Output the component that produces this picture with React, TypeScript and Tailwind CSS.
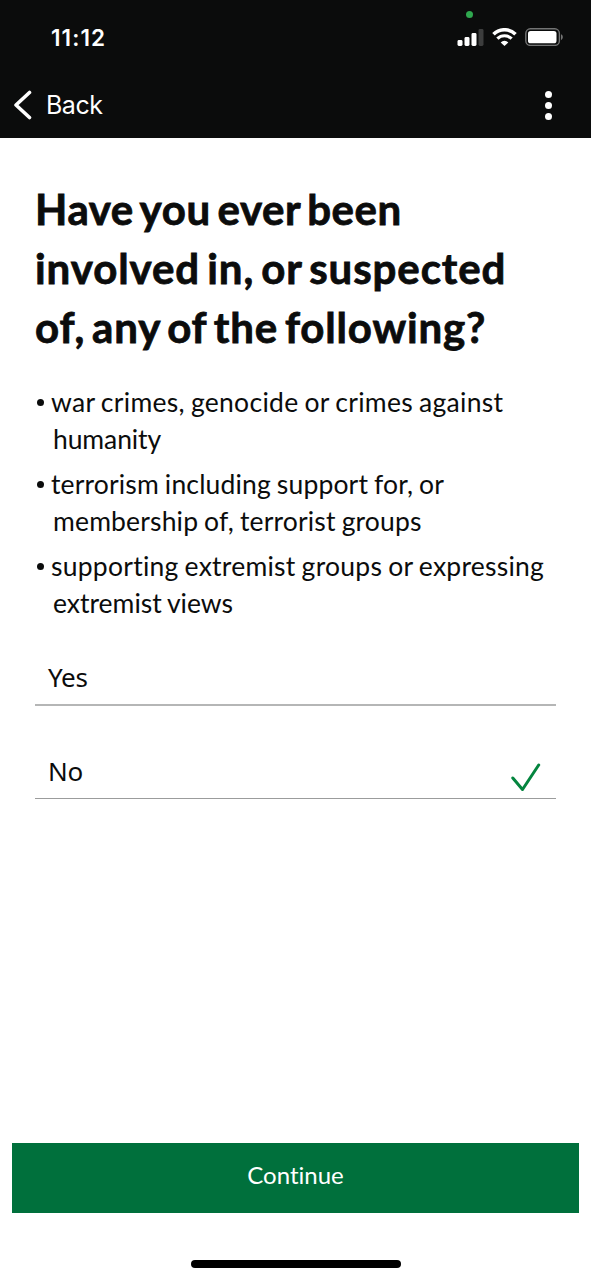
import React, { useState } from 'react';
import clsx from 'clsx';

interface Line {
  text: string;
  className: string;
}

const heading: Line[] = [
  { text: 'Have you ever been', className: 'tracking-[0.58px]' },
  { text: 'involved in, or suspected', className: 'tracking-[0.92px]' },
  { text: 'of, any of the following?', className: 'tracking-[0.83px]' },
];

const bullets: Line[][] = [
  [
    { text: 'war crimes, genocide or crimes against', className: 'tracking-[0.29px]' },
    { text: 'humanity', className: 'tracking-[-0.1px]' },
  ],
  [
    { text: 'terrorism including support for, or', className: 'tracking-[0.16px]' },
    { text: 'membership of, terrorist groups', className: 'tracking-[0.17px]' },
  ],
  [
    { text: 'supporting extremist groups or expressing', className: 'tracking-[0.25px]' },
    { text: 'extremist views', className: 'tracking-[0px]' },
  ],
];

const StatusBar: React.FC = () => (
  <div className="relative flex h-[72px] items-start justify-between pt-[24px] pr-[27px] pl-[51px]">
    <span className="font-['Inter',sans-serif] text-[22.5px] leading-[28px] font-semibold tracking-[1.1px]">11:12</span>
    <span className="absolute top-[11px] left-[465.5px] h-[7px] w-[7px] rounded-full bg-[#2fa84f]" />
    <div className="flex items-center pt-[4px]">
      {/* Signal */}
      <svg className="mr-[8px]" width="27" height="18" viewBox="0 0 27 18" fill="#fff">
        <rect x="0.5" y="12" width="5" height="6" rx="1.4" />
        <rect x="7.5" y="9" width="5" height="9" rx="1.4" />
        <rect x="14.5" y="5" width="5" height="13" rx="1.4" />
        <rect x="21.5" y="1" width="5" height="17" rx="1.4" fill="#3c3d3d" />
      </svg>
      {/* Wifi */}
      <svg className="mr-[8px]" width="25" height="18" viewBox="0 0 25 18" fill="none" stroke="#fff">
        <path d="M1.5 6.3a15.6 15.6 0 0 1 22 0" strokeWidth="3.6" />
        <path d="M5.4 10.7a10 10 0 0 1 14.2 0" strokeWidth="3.2" />
        <path d="M12.5 18L8.7 14.4a5.2 5.2 0 0 1 7.6 0z" fill="#fff" stroke="none" />
      </svg>
      {/* Battery */}
      <svg width="39" height="18" viewBox="0 0 39 18" fill="none">
        <rect x="0.8" y="0.8" width="33.6" height="16.6" rx="4.6" stroke="#737474" strokeWidth="1.4" />
        <rect x="3" y="3" width="28.5" height="12.3" rx="2.6" fill="#fff" />
        <path d="M36 6.3c2.4.8 2.4 4.8 0 5.6z" fill="#737474" />
      </svg>
    </div>
  </div>
);

const NavBar: React.FC = () => (
  <div className="flex h-[66px] items-center justify-between pr-[39px] pl-[13px]">
    <button className="flex items-center gap-[13px]">
      <svg width="20" height="30" viewBox="0 0 20 30" fill="none" stroke="#fff" strokeWidth="3.6" strokeLinecap="round" strokeLinejoin="round">
        <path d="M16.5 2.5L3 15l13.5 12.5" />
      </svg>
      <span className="font-['Inter',sans-serif] text-[25px] leading-[30px] tracking-[-0.5px]">Back</span>
    </button>
    <button className="flex flex-col gap-[4px]">
      <span className="h-[7px] w-[7px] rounded-full bg-white" />
      <span className="h-[7px] w-[7px] rounded-full bg-white" />
      <span className="h-[7px] w-[7px] rounded-full bg-white" />
    </button>
  </div>
);

interface OptionProps {
  label: string;
  selected: boolean;
  className: string;
  onSelect: () => void;
}

const Option: React.FC<OptionProps> = ({ label, selected, className, onSelect }) => (
  <button
    onClick={onSelect}
    className={clsx('flex w-full items-start justify-between pr-[15px] pl-[13px] text-left', className)}
  >
    <span className="font-['Noto_Sans',sans-serif] text-[26px] leading-[52px] tracking-[-0.3px]">{label}</span>
    {selected && (
      <svg className="mt-[18px]" width="30" height="30" viewBox="0 0 30 30" fill="none" stroke="#04853f" strokeWidth="3" strokeLinecap="round" strokeLinejoin="round">
        <path d="M1.8 15l9.7 11.5L27.7 2" />
      </svg>
    )}
  </button>
);

const options = [
  { label: 'Yes', className: 'h-[55px] border-b-2 border-[#b5b6b6]' },
  { label: 'No', className: 'h-[54px] border-b border-[#9b9c9c]' },
];

const App: React.FC = () => {
  const [answer, setAnswer] = useState<string>('No');

  return (
    <div className="flex h-[1280px] w-[591px] flex-col overflow-hidden bg-white font-['Lato',sans-serif] text-[#0b0c0c] [font-variant-ligatures:none]">
      {/* Header */}
      <header className="h-[138px] shrink-0 bg-[#0b0c0c] text-white">
        <StatusBar />
        <NavBar />
      </header>

      {/* Question */}
      <main className="flex-1 px-[35px] pt-[42px]">
        <h1 className="text-[42px] leading-[59px] font-bold [-webkit-text-stroke:0.8px_#0b0c0c] [word-spacing:-4px]">
          {heading.map(line => (
            <span key={line.text} className="block whitespace-nowrap">
              <span className={line.className}>{line.text}</span>
            </span>
          ))}
        </h1>

        <ul className="mt-[27px] flex flex-col gap-[8px] text-[26.5px] leading-[37px] [word-spacing:-1px]">
          {bullets.map(lines => (
            <li key={lines[0].text} className="flex">
              <span className="mt-[15px] mr-[7px] ml-[2px] h-[7px] w-[7px] shrink-0 rounded-full bg-[#0b0c0c]" />
              <span className="w-0 whitespace-nowrap">
                {lines.map((line, i) => (
                  <span key={line.text} className={clsx('block', i > 0 && 'pl-[2px]')}>
                    <span className={line.className}>{line.text}</span>
                  </span>
                ))}
              </span>
            </li>
          ))}
        </ul>

        <div className="mt-[29px] flex flex-col gap-[39px]">
          {options.map(option => (
            <Option
              key={option.label}
              label={option.label}
              className={option.className}
              selected={answer === option.label}
              onSelect={() => setAnswer(option.label)}
            />
          ))}
        </div>
      </main>

      {/* Footer */}
      <footer className="flex flex-col items-center px-[12px] pb-[12px]">
        <button className="h-[70px] w-full bg-[#00703c] pb-[6px] text-[24px] leading-[64px] text-white">Continue</button>
        <div className="mt-[47px] h-[8px] w-[210px] rounded-full bg-black" />
      </footer>
    </div>
  );
};

export default App;
